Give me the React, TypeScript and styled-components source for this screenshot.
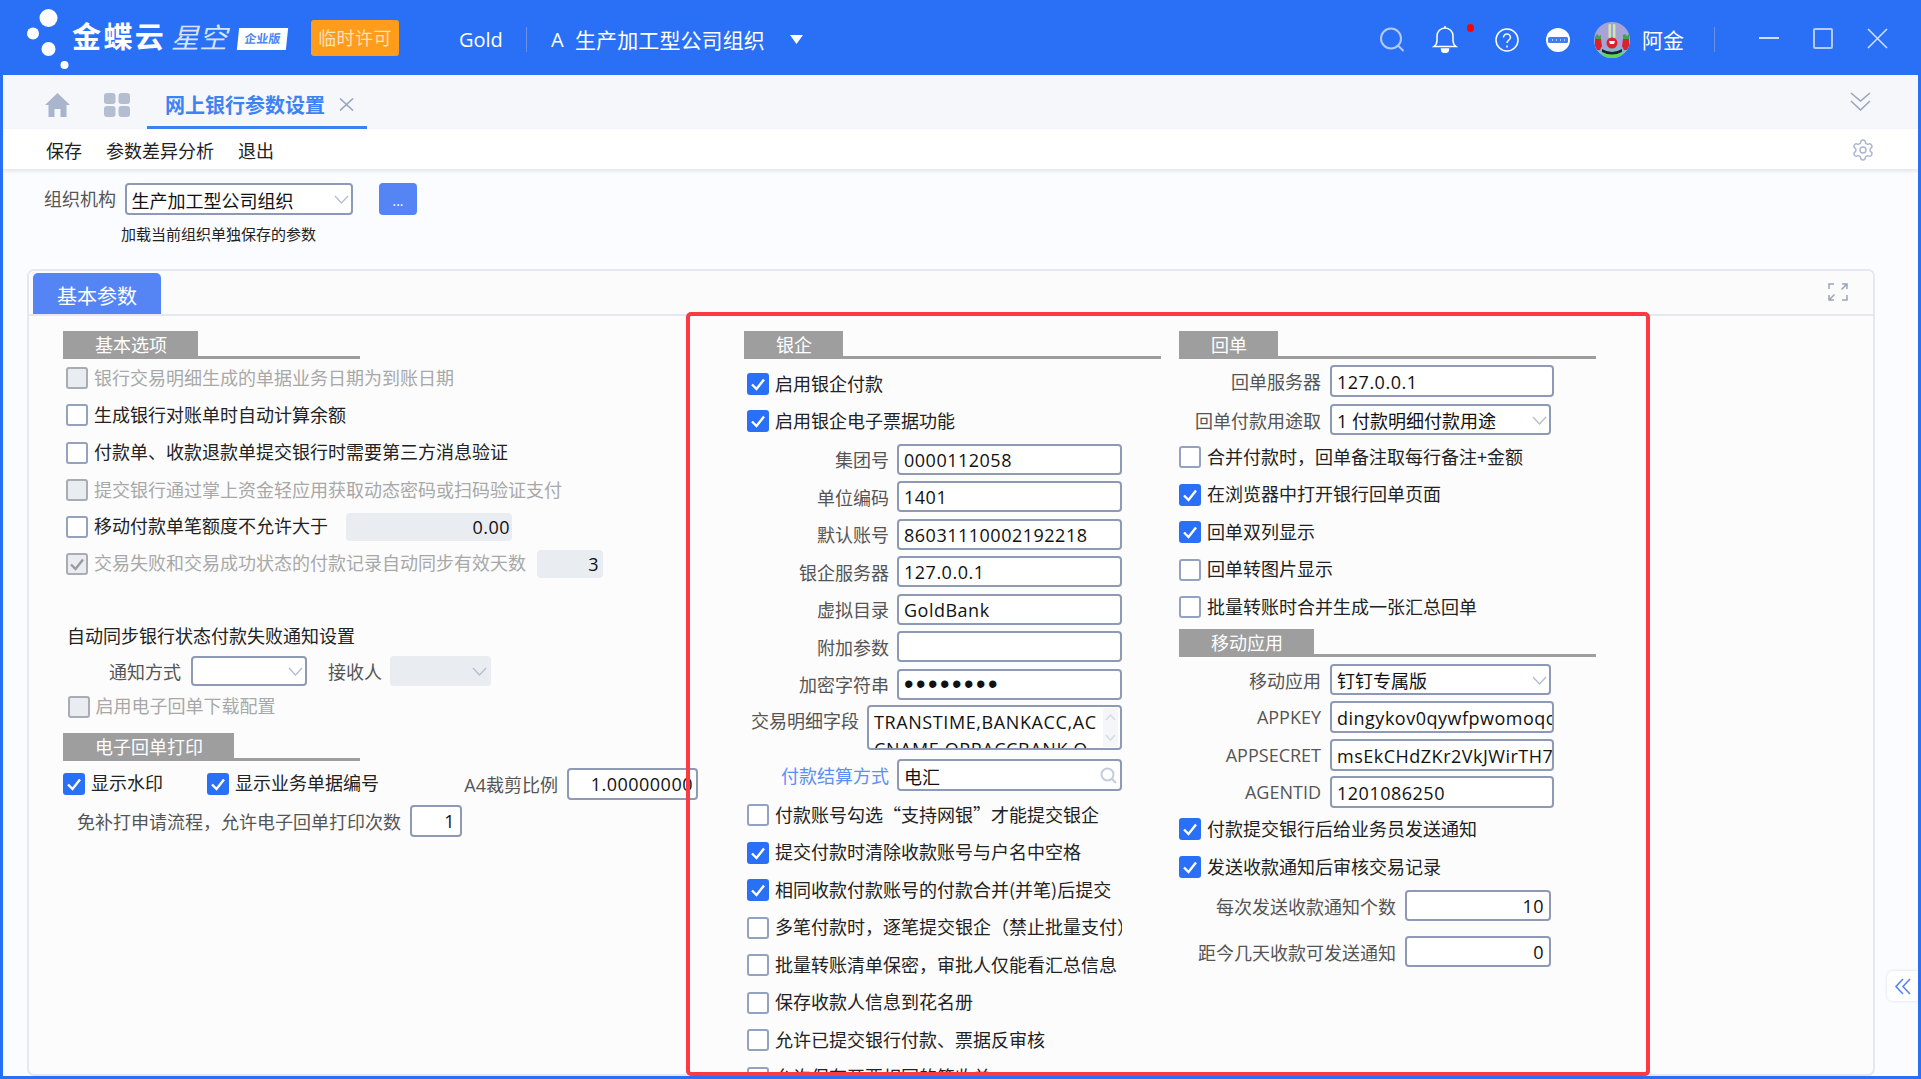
import React from "react";
import styled, { createGlobalStyle } from "styled-components";
import { Settings } from "lucide-react";

const FONT = `"Open Sans","Noto Sans CJK SC",sans-serif`;
const CJK = `"Noto Sans CJK SC","Open Sans",sans-serif`;

const Global = createGlobalStyle`
  html, body { margin: 0; padding: 0; background: #2970f6; }
  * { box-sizing: border-box; }
  body { font-family: ${FONT}; font-size: 18px; color: #222; }
`;

const Frame = styled.div`
  position: relative;
  width: 1921px;
  height: 1079px;
  display: flex;
  flex-direction: column;
  background: #2970f6;
  overflow: hidden;
`;

const Header = styled.header`
  height: 75px;
  flex: none;
  display: flex;
  align-items: center;
  padding: 4px 0 0 24px;
  color: #fff;
  white-space: nowrap;
`;

const LogoDots = styled.svg`
  width: 46px;
  height: 75px;
  flex: none;
  align-self: flex-start;
  margin-top: -4px;
  display: block;
`;

const BrandText = styled.span<{ $ml: number; $w: number }>`
  margin: -5px 0 0 ${(p) => p.$ml}px;
  width: ${(p) => p.$w}px;
  flex: none;
  font-size: 29px;
  line-height: 36px;
  font-weight: 700;
  letter-spacing: 2.4px;
`;

const BrandLight = styled(BrandText)`
  font-weight: 400;
  font-style: italic;
  letter-spacing: 0;
  font-size: 28px;
  color: #d6e4ff;
`;

const EditionBadge = styled.span`
  margin: -2px 0 0 11px;
  width: 49px;
  height: 22px;
  flex: none;
  background: #fff;
  color: #4b86f3;
  font-size: 12px;
  font-weight: 700;
  line-height: 22px;
  text-align: center;
  transform: skewX(-6deg);
`;

const LicenseBadge = styled.span`
  margin: -3px 0 0 24px;
  width: 88px;
  height: 36px;
  flex: none;
  background: #ff9c1b;
  border-radius: 3px;
  color: #fbe0b8;
  font-size: 18px;
  line-height: 36px;
  text-align: center;
  letter-spacing: 0.4px;
`;

const HeadText = styled.span<{ $ml: number; $w?: number }>`
  margin-left: ${(p) => p.$ml}px;
  ${(p) => (p.$w ? `width:${p.$w}px;flex:none;` : "")}
  font-size: 20px;
  line-height: 28px;
  color: #fff;
`;

const OrgName = styled(HeadText)`
  font-size: 21px;
  letter-spacing: 0.1px;
`;

const HeadDivider = styled.span<{ $ml: number }>`
  margin-left: ${(p) => p.$ml}px;
  width: 1px;
  height: 25px;
  flex: none;
  background: #6c8fe6;
`;

const HeadIcon = styled.span<{ $ml: number; $w: number; $raise?: number }>`
  position: relative;
  margin-left: ${(p) => p.$ml}px;
  margin-bottom: ${(p) => p.$raise ?? 0}px;
  width: ${(p) => p.$w}px;
  flex: none;
  display: flex;
  align-items: center;
  justify-content: center;
  svg { display: block; }
`;

const RedDot = styled.span`
  position: absolute;
  top: -2px;
  right: -16px;
  width: 7px;
  height: 8px;
  border-radius: 50%;
  background: #ff0000;
`;

const RightGroup = styled.div`
  margin-left: auto;
  padding-right: 33px;
  display: flex;
  align-items: center;
`;

const Content = styled.main`
  flex: 1;
  min-height: 0;
  margin: 0 3px 3px;
  display: flex;
  flex-direction: column;
  background: #fbfcff;
  overflow: hidden;
`;

const TabBar = styled.nav`
  height: 54px;
  flex: none;
  display: flex;
  align-items: center;
  padding: 8px 0 0 42px;
  background: #f5f7fb;
`;

const NavIcon = styled.span<{ $ml?: number }>`
  margin-left: ${(p) => p.$ml ?? 0}px;
  margin-top: -3px;
  flex: none;
  display: flex;
  svg { display: block; }
`;

const ActiveTab = styled.div`
  margin-left: 17px;
  width: 220px;
  height: 46px;
  flex: none;
  display: flex;
  align-items: center;
  padding-left: 18px;
  border-bottom: 3px solid #3b82f6;
  color: #3d83f4;
  font-size: 20px;
  font-weight: 700;
  white-space: nowrap;
`;

const TabClose = styled.span`
  margin-left: 14px;
  display: flex;
`;

const TabBarEnd = styled.span`
  margin: -10px 0 0 auto;
  padding-right: 47px;
  display: flex;
`;

const Toolbar = styled.div`
  position: relative;
  height: 40px;
  flex: none;
  display: flex;
  align-items: center;
  gap: 24px;
  padding: 2px 43px 0 43px;
  background: #fff;
  box-shadow: 0 2px 4px rgba(40, 50, 80, 0.12);
  color: #222;
  font-size: 18px;
  white-space: nowrap;
`;

const ToolbarEnd = styled.span`
  margin-left: auto;
  display: flex;
  color: #a9b5cc;
`;

const OrgRow = styled.div`
  margin-top: 14px;
  height: 32px;
  flex: none;
  display: flex;
  align-items: center;
  padding-left: 41px;
`;

const OrgLabel = styled.span`
  width: 72px;
  margin-right: 8.5px;
  padding-bottom: 2px;
  flex: none;
  color: #555;
  font-size: 18px;
  white-space: nowrap;
`;

const MoreButton = styled.button`
  margin-left: 26.5px;
  width: 38px;
  height: 32px;
  flex: none;
  border: 0;
  border-radius: 4px;
  background: #5585f5;
  color: #fff;
  font: 14px/36px ${FONT};
  padding: 0;
`;

const OrgNote = styled.div`
  margin-top: 8px;
  height: 22px;
  padding-left: 118px;
  font-size: 15px;
  line-height: 22px;
  color: #222;
  flex: none;
`;

const Card = styled.section`
  margin: 24px 0 0 24px;
  width: 1848px;
  flex: 1;
  min-height: 0;
  display: flex;
  flex-direction: column;
  border: 2px solid #e4e8f2;
  border-radius: 7px;
  background: #fcfcfc;
  overflow: hidden;
`;

const CardStrip = styled.div`
  height: 45px;
  flex: none;
  display: flex;
  align-items: flex-end;
  justify-content: space-between;
  padding: 0 25px 0 4px;
  border-bottom: 2px solid #e4e8f2;
  background: #fbfbfc;
`;

const CardTab = styled.div`
  width: 128px;
  height: 41px;
  border-radius: 5px 5px 0 0;
  background: #5585f5;
  color: #fff;
  font-size: 20px;
  line-height: 48px;
  text-align: center;
`;

const ExpandIcon = styled.span`
  align-self: center;
  margin-bottom: 2px;
  display: flex;
`;

const CardBody = styled.div`
  flex: 1;
  min-height: 0;
  display: grid;
  grid-template-columns: 681px 435px 417px;
  padding: 15px 0 0 34px;
  overflow: hidden;
`;

const Column = styled.div`
  display: flex;
  flex-direction: column;
  align-items: flex-start;
  min-width: 0;
`;

const SectionHead = styled.div<{ $w: number; $mt?: number }>`
  margin-top: ${(p) => p.$mt ?? 0}px;
  width: ${(p) => p.$w}px;
  height: 28px;
  flex: none;
  border-bottom: 3px solid #9e9e9e;
`;

const SectionTitle = styled.div<{ $w: number }>`
  width: ${(p) => p.$w}px;
  height: 25px;
  padding-left: 32px;
  background: #9e9e9e;
  color: #fff;
  font-size: 18px;
  line-height: 28px;
`;

const CheckRow = styled.div<{ $mt: number; $indent?: number; $muted?: boolean; $clip?: number }>`
  margin-top: ${(p) => p.$mt}px;
  margin-left: ${(p) => p.$indent ?? 0}px;
  ${(p) => (p.$clip ? `width:${p.$clip}px;overflow:hidden;` : "")}
  height: 22px;
  flex: none;
  display: flex;
  align-items: center;
  gap: 6px;
  color: ${(p) => (p.$muted ? "#a8a8a8" : "#222")};
  font-family: ${CJK};
  font-size: 18px;
  white-space: nowrap;
`;

const CheckText = styled.span`
  padding-bottom: 3px;
`;

const CheckBox = styled.span<{ $on?: boolean; $muted?: boolean }>`
  width: 22px;
  height: 22px;
  flex: none;
  display: flex;
  align-items: center;
  justify-content: center;
  border-radius: 3px;
  border: 2px solid ${(p) => (p.$on ? "#2970f6" : p.$muted ? "#a9acb3" : "#95a2bf")};
  background: ${(p) => (p.$on ? "#2970f6" : p.$muted ? "#e9ecf1" : "#fff")};
`;

const InlineRow = styled.div<{ $mt: number; $pl?: number; $h?: number }>`
  margin-top: ${(p) => p.$mt}px;
  padding-left: ${(p) => p.$pl ?? 0}px;
  height: ${(p) => p.$h ?? 31}px;
  flex: none;
  display: flex;
  align-items: center;
  white-space: nowrap;
`;

const FieldLabel = styled.span<{ $w: number; $gap?: number; $tone?: "blue"; $top?: boolean }>`
  width: ${(p) => p.$w}px;
  margin-right: ${(p) => p.$gap ?? 8}px;
  flex: none;
  text-align: right;
  font-size: 18px;
  color: ${(p) => (p.$tone === "blue" ? "#5b8ff5" : "#555")};
  white-space: nowrap;
  ${(p) => (p.$top ? "align-self:flex-start;line-height:32px;" : "")}
`;

const InputBox = styled.div<{ $w: number; $h?: number; $right?: boolean; $off?: boolean; $pr?: number; $ml?: number }>`
  margin-left: ${(p) => p.$ml ?? 0}px;
  width: ${(p) => p.$w}px;
  height: ${(p) => p.$h ?? 31}px;
  flex: none;
  display: flex;
  align-items: center;
  justify-content: ${(p) => (p.$right ? "flex-end" : "space-between")};
  padding: 1px ${(p) => p.$pr ?? 5}px 0 5px;
  border: 2px solid ${(p) => (p.$off ? "#e9ecf1" : "#8e9ab5")};
  border-radius: 4px;
  background: ${(p) => (p.$off ? "#e9ecf1" : "#fff")};
  color: #111;
  font-size: 18px;
  white-space: nowrap;
  overflow: hidden;
`;

const NumberValue = styled.span`
  letter-spacing: 0.5px;
`;

const PasswordDots = styled.span`
  font-family: "Liberation Sans", sans-serif;
  font-size: 27px;
  line-height: 27px;
  letter-spacing: 2.55px;
`;

const TextAreaBox = styled.div`
  width: 255px;
  height: 45px;
  flex: none;
  display: flex;
  padding-left: 5px;
  border: 2px solid #8e9ab5;
  border-radius: 4px;
  background: #fff;
  overflow: hidden;
`;

const TextAreaText = styled.div`
  flex: 1;
  min-width: 0;
  padding-top: 2px;
  white-space: pre;
  overflow: hidden;
  font-size: 18px;
  line-height: 27px;
  color: #111;
  letter-spacing: 0.6px;
`;

const ScrollTrack = styled.div`
  width: 15px;
  margin: 1px 2px 1px 0;
  flex: none;
  display: flex;
  flex-direction: column;
  align-items: center;
  justify-content: space-around;
  background: #f4f6fa;
`;

const CollapseTab = styled.div`
  position: absolute;
  left: 1887px;
  top: 971px;
  width: 31px;
  height: 30px;
  display: flex;
  align-items: center;
  justify-content: center;
  border-radius: 6px 0 0 6px;
  background: #fff;
  box-shadow: 0 0 3px rgba(60, 80, 130, 0.18);
`;

const RedOutline = styled.div`
  position: absolute;
  left: 686px;
  top: 312px;
  width: 964px;
  height: 764px;
  border: 4.5px solid #fb3a42;
  border-radius: 5px;
  pointer-events: none;
`;

const Chevron = () => (
  <svg width="15" height="9" viewBox="0 0 15 9" fill="none" stroke="#b3bdd0" strokeWidth="1.3">
    <path d="M1 1l6.5 7L14 1" />
  </svg>
);

const Tick = ({ muted }: { muted?: boolean }) => (
  <svg width="18" height="18" viewBox="0 0 18 18" fill="none" stroke={muted ? "#9a9a9a" : "#fff"} strokeWidth="2.4">
    <path d="M3 9.5L7.5 14L15 4.5" />
  </svg>
);

const Check = ({
  label, on, muted, mt, indent, clip,
}: { label: string; on?: boolean; muted?: boolean; mt: number; indent?: number; clip?: number }) => (
  <CheckRow $mt={mt} $indent={indent} $muted={muted} $clip={clip}>
    <CheckBox $on={on && !muted} $muted={muted}>
      {on ? <Tick muted={muted} /> : null}
    </CheckBox>
    <CheckText>{label}</CheckText>
  </CheckRow>
);

const Select = ({ w, h, text, off }: { w: number; h?: number; text?: string; off?: boolean }) => (
  <InputBox $w={w} $h={h} $off={off} $pr={2}>
    <span>{text}</span>
    <Chevron />
  </InputBox>
);

const Section = ({ w, tw, title, mt }: { w: number; tw: number; title: string; mt?: number }) => (
  <SectionHead $w={w} $mt={mt}>
    <SectionTitle $w={tw}>{title}</SectionTitle>
  </SectionHead>
);

const Avatar = () => (
  <svg width="36" height="36" viewBox="0 0 36 36">
    <defs>
      <clipPath id="av"><circle cx="18" cy="18" r="18" /></clipPath>
    </defs>
    <g clipPath="url(#av)">
      <rect width="36" height="36" fill="#a7a3d6" />
      <rect y="25" width="36" height="11" fill="#86b6cf" />
      <path d="M4 32h28l2 5H2z" fill="#5fd35f" />
      <path d="M8 27q10 6 20 0v3q-10 5-20 0z" fill="#1b2230" />
      <rect x="14.5" y="2" width="2.4" height="14" rx="1" fill="#cfe8a8" />
      <rect x="19" y="2" width="2.4" height="14" rx="1" fill="#cfe8a8" />
      <ellipse cx="18" cy="21" rx="5.5" ry="5.5" fill="#d8232a" />
      <path d="M15 19h6l-1 3h-4z" fill="#fff" />
      <path d="M1 17h6l1 7-2 4H3l-2-4z" fill="#d8232a" />
      <path d="M29 17h6v7l-2 4h-3l-2-4z" fill="#d8232a" />
      <path d="M1 15l2-3 2 2 2-1v4H1zM29 13l2-1 2 2 2-2v5h-6z" fill="#3fa34d" />
    </g>
  </svg>
);

const S = { fill: "none", stroke: "#fff", strokeWidth: 1.5 };

const leftChecks = [
  { label: "银行交易明细生成的单据业务日期为到账日期", muted: true },
  { label: "生成银行对账单时自动计算余额" },
  { label: "付款单、收款退款单提交银行时需要第三方消息验证" },
  { label: "提交银行通过掌上资金轻应用获取动态密码或扫码验证支付", muted: true },
];

const bankFields: { label: string; value?: string }[] = [
  { label: "集团号", value: "0000112058" },
  { label: "单位编码", value: "1401" },
  { label: "默认账号", value: "86031110002192218" },
  { label: "银企服务器", value: "127.0.0.1" },
  { label: "虚拟目录", value: "GoldBank" },
  { label: "附加参数", value: "" },
];

const bankChecks = [
  { label: "付款账号勾选“支持网银”才能提交银企" },
  { label: "提交付款时清除收款账号与户名中空格", on: true },
  { label: "相同收款付款账号的付款合并(并笔)后提交", on: true },
  { label: "多笔付款时，逐笔提交银企（禁止批量支付）" },
  { label: "批量转账清单保密，审批人仅能看汇总信息" },
  { label: "保存收款人信息到花名册" },
  { label: "允许已提交银行付款、票据反审核" },
  { label: "允许保存开票相同的笔收单" },
];

const receiptChecks = [
  { label: "合并付款时，回单备注取每行备注+金额" },
  { label: "在浏览器中打开银行回单页面", on: true },
  { label: "回单双列显示", on: true },
  { label: "回单转图片显示" },
  { label: "批量转账时合并生成一张汇总回单" },
];

export default function App() {
  return (
    <Frame>
      <Global />
      <Header>
        <LogoDots viewBox="24 0 46 75" fill="#fff">
          <circle cx="48.5" cy="18" r="9" />
          <circle cx="33" cy="33.5" r="6" />
          <circle cx="48.5" cy="49" r="7" />
          <circle cx="64.5" cy="65" r="4" />
        </LogoDots>
        <BrandText $ml={2} $w={94}>金蝶云</BrandText>
        <BrandLight $ml={5} $w={56}>星空</BrandLight>
        <EditionBadge>企业版</EditionBadge>
        <LicenseBadge>临时许可</LicenseBadge>
        <HeadText $ml={60} $w={47}>Gold</HeadText>
        <HeadDivider $ml={20} />
        <HeadText $ml={24} $w={24}>A</HeadText>
        <OrgName $ml={0} $w={215}>生产加工型公司组织</OrgName>
        <svg width="13" height="9" viewBox="0 0 13 9" fill="#fff"><path d="M0 0h13L6.5 9z" /></svg>
        <RightGroup>
          <HeadIcon $ml={0} $w={26}>
            <svg width="26" height="26" viewBox="0 0 26 26" fill="none" stroke="#b2cbfb" strokeWidth="2">
              <circle cx="12" cy="11.5" r="10" />
              <path d="M19.5 19l5 5" />
            </svg>
          </HeadIcon>
          <HeadIcon $ml={27} $w={26}>
            <svg width="26" height="27" viewBox="0 0 26 27" {...S}>
              <path d="M2 20.5c2-1.5 3-3 3-6V10a8 8 0 0116 0v4.5c0 3 1 4.5 3 6z" />
              <path d="M13 0v2" />
              <path d="M9.5 23h7c0 2-1.5 3.5-3.5 3.5S9.5 25 9.5 23z" fill="#fff" />
            </svg>
            <RedDot />
          </HeadIcon>
          <HeadIcon $ml={37} $w={24}>
            <svg width="24" height="24" viewBox="0 0 24 24" {...S}>
              <circle cx="12" cy="12" r="11" />
              <path d="M8.5 9.5a3.5 3.5 0 117 0c0 2.5-3.5 2.5-3.5 5.5" />
              <path d="M12 17.5v2" />
            </svg>
          </HeadIcon>
          <HeadIcon $ml={27} $w={24}>
            <svg width="24" height="24" viewBox="0 0 24 24">
              <circle cx="12" cy="12" r="12" fill="#fff" />
              <rect x="2" y="9" width="20" height="6" rx="1.5" fill="#3f7ef0" />
              <path d="M6 12h1M10 12h1M14 12h1M18 12h1" stroke="#cfe0ff" strokeWidth="1.6" />
            </svg>
          </HeadIcon>
          <HeadIcon $ml={24} $w={36}><Avatar /></HeadIcon>
          <OrgName $ml={12} $w={42}>阿金</OrgName>
          <HeadDivider $ml={30} />
          <HeadIcon $ml={44} $w={20} $raise={3}>
            <svg width="20" height="3" viewBox="0 0 20 3"><rect width="20" height="2" fill="#cfe0ff" /></svg>
          </HeadIcon>
          <HeadIcon $ml={34} $w={20} $raise={3}>
            <svg width="20" height="21" viewBox="0 0 20 21" fill="none" stroke="#b2cbfb" strokeWidth="2">
              <rect x="1" y="1" width="18" height="19" rx="1" />
            </svg>
          </HeadIcon>
          <HeadIcon $ml={34} $w={21} $raise={3}>
            <svg width="21" height="21" viewBox="0 0 21 21" fill="none" stroke="#cfe0ff" strokeWidth="1.6">
              <path d="M1 1l19 19M20 1L1 20" />
            </svg>
          </HeadIcon>
        </RightGroup>
      </Header>

      <Content>
        <TabBar>
          <NavIcon>
            <svg width="25" height="24" viewBox="0 0 25 24" fill="#a9b5cc">
              <path d="M12.5 0L25 12h-3.5v12h-6v-8h-6v8h-6V12H0z" />
            </svg>
          </NavIcon>
          <NavIcon $ml={34}>
            <svg width="26" height="24" viewBox="0 0 26 24" fill="#b4bed1">
              <rect width="11.5" height="11" rx="3" />
              <rect x="14.5" width="11.5" height="11" rx="3" />
              <rect y="13" width="11.5" height="11" rx="3" />
              <rect x="14.5" y="13" width="11.5" height="11" rx="3" />
            </svg>
          </NavIcon>
          <ActiveTab>
            网上银行参数设置
            <TabClose>
              <svg width="15" height="13" viewBox="0 0 15 13" fill="none" stroke="#98a4bb" strokeWidth="1.6">
                <path d="M1 0.5l13 12M14 0.5L1 12.5" />
              </svg>
            </TabClose>
          </ActiveTab>
          <TabBarEnd>
            <svg width="21" height="19" viewBox="0 0 21 19" fill="none" stroke="#98a4bb" strokeWidth="1.5">
              <path d="M1 1l9.5 8L20 1M1 9l9.500 9L20 9" />
            </svg>
          </TabBarEnd>
        </TabBar>

        <Toolbar>
          <span>保存</span>
          <span>参数差异分析</span>
          <span>退出</span>
          <ToolbarEnd><Settings size={24} strokeWidth={1.4} /></ToolbarEnd>
        </Toolbar>

        <OrgRow>
          <OrgLabel>组织机构</OrgLabel>
          <Select w={228} h={32} text="生产加工型公司组织" />
          <MoreButton>...</MoreButton>
        </OrgRow>
        <OrgNote>加载当前组织单独保存的参数</OrgNote>

        <Card>
          <CardStrip>
            <CardTab>基本参数</CardTab>
            <ExpandIcon>
              <svg width="20" height="18" viewBox="0 0 20 18" fill="none" stroke="#9aa5bb" strokeWidth="1.5">
                <path d="M1 6V1h5M14 1h5v5M1 12v5h5M14 17h5v-5M19 1l-5.5 5.5M1 17l5.5-5.5" />
              </svg>
            </ExpandIcon>
          </CardStrip>
          <CardBody>
            <Column>
              <Section w={297} tw={135} title="基本选项" />
              {leftChecks.map((c, i) => (
                <Check key={c.label} label={c.label} muted={c.muted} mt={i === 0 ? 8 : 15.4} indent={3} />
              ))}
              <InlineRow $mt={11.6} $h={28}>
                <Check label="移动付款单笔额度不允许大于" mt={0} indent={3} />
                <InputBox $ml={18} $w={166} $h={28} $right $off $pr={0}>
                  <NumberValue>0.00</NumberValue>
                </InputBox>
              </InlineRow>
              <InlineRow $mt={9} $h={28}>
                <Check label="交易失败和交易成功状态的付款记录自动同步有效天数" on muted mt={0} indent={3} />
                <InputBox $ml={11} $w={66} $h={28} $right $off $pr={2}><NumberValue>3</NumberValue></InputBox>
              </InlineRow>
              <InlineRow $mt={45} $h={24} $pl={4}>自动同步银行状态付款失败通知设置</InlineRow>
              <InlineRow $mt={9} $h={30} $pl={46}>
                <FieldLabel $w={72} $gap={10}>通知方式</FieldLabel>
                <Select w={116} h={30} />
                <FieldLabel $w={75} $gap={8}>接收人</FieldLabel>
                <Select w={101} h={30} off />
              </InlineRow>
              <Check label="启用电子回单下载配置" muted mt={10} indent={4.5} />
              <Section w={297} tw={171} title="电子回单打印" mt={15} />
              <InlineRow $mt={7} $h={32}>
                <Check label="显示水印" on mt={0} />
                <Check label="显示业务单据编号" on mt={0} indent={44} />
                <FieldLabel $w={179} $gap={9}>A4裁剪比例</FieldLabel>
                <InputBox $w={131} $h={32} $right $pr={3}><NumberValue>1.00000000</NumberValue></InputBox>
              </InlineRow>
              <InlineRow $mt={5} $h={32} $pl={14}>
                <FieldLabel $w={324} $gap={9}>免补打申请流程，允许电子回单打印次数</FieldLabel>
                <InputBox $w={52} $h={32} $right><NumberValue>1</NumberValue></InputBox>
              </InlineRow>
            </Column>

            <Column>
              <Section w={417} tw={99} title="银企" />
              <Check label="启用银企付款" on mt={14} indent={3} />
              <Check label="启用银企电子票据功能" on mt={15} indent={3} />
              {bankFields.map((f, i) => (
                <InlineRow key={f.label} $mt={i === 0 ? 11.5 : 6.5}>
                  <FieldLabel $w={145}>{f.label}</FieldLabel>
                  <InputBox $w={225}><NumberValue>{f.value}</NumberValue></InputBox>
                </InlineRow>
              ))}
              <InlineRow $mt={6.5}>
                <FieldLabel $w={145}>加密字符串</FieldLabel>
                <InputBox $w={225}><PasswordDots>••••••••</PasswordDots></InputBox>
              </InlineRow>
              <InlineRow $mt={5.5} $h={45}>
                <FieldLabel $w={115} $top>交易明细字段</FieldLabel>
                <TextAreaBox>
                  <TextAreaText>{"TRANSTIME,BANKACC,AC\nCNAME,OPPACCBANK,O"}</TextAreaText>
                  <ScrollTrack>
                    <svg width="11" height="7" viewBox="0 0 11 7" fill="none" stroke="#d5dbe6" strokeWidth="1.5"><path d="M1 6l4.5-5L10 6" /></svg>
                    <svg width="11" height="7" viewBox="0 0 11 7" fill="none" stroke="#d5dbe6" strokeWidth="1.5"><path d="M1 1l4.5 5L10 1" /></svg>
                  </ScrollTrack>
                </TextAreaBox>
              </InlineRow>
              <InlineRow $mt={9} $h={32}>
                <FieldLabel $w={145} $tone="blue">付款结算方式</FieldLabel>
                <InputBox $w={225} $h={32} $pr={3}>
                  <span>电汇</span>
                  <svg width="17" height="17" viewBox="0 0 17 17" fill="none" stroke="#c3ccdb" strokeWidth="2">
                    <circle cx="7.5" cy="7.5" r="6" /><path d="M12 12l4 4" />
                  </svg>
                </InputBox>
              </InlineRow>
              {bankChecks.map((c, i) => (
                <Check key={c.label} label={c.label} on={c.on} mt={i === 0 ? 13 : 15.5} indent={3} clip={375} />
              ))}
            </Column>

            <Column>
              <Section w={417} tw={99} title="回单" />
              <InlineRow $mt={6} $h={32}>
                <FieldLabel $w={142} $gap={9}>回单服务器</FieldLabel>
                <InputBox $w={224} $h={32}><NumberValue>127.0.0.1</NumberValue></InputBox>
              </InlineRow>
              <InlineRow $mt={7}>
                <FieldLabel $w={142} $gap={9}>回单付款用途取</FieldLabel>
                <Select w={221} text="1 付款明细付款用途" />
              </InlineRow>
              {receiptChecks.map((c, i) => (
                <Check key={c.label} label={c.label} on={c.on} mt={i === 0 ? 11 : 15.5} />
              ))}
              <Section w={417} tw={135} title="移动应用" mt={11} />
              <InlineRow $mt={7}>
                <FieldLabel $w={142} $gap={9}>移动应用</FieldLabel>
                <Select w={221} text="钉钉专属版" />
              </InlineRow>
              <InlineRow $mt={6} $h={32}>
                <FieldLabel $w={142} $gap={9}>APPKEY</FieldLabel>
                <InputBox $w={224} $h={32} $pr={0}><NumberValue>dingykov0qywfpwomoqc</NumberValue></InputBox>
              </InlineRow>
              <InlineRow $mt={6} $h={32}>
                <FieldLabel $w={142} $gap={9}>APPSECRET</FieldLabel>
                <InputBox $w={224} $h={32} $pr={0}><NumberValue>msEkCHdZKr2VkJWirTH7</NumberValue></InputBox>
              </InlineRow>
              <InlineRow $mt={5} $h={32}>
                <FieldLabel $w={142} $gap={9}>AGENTID</FieldLabel>
                <InputBox $w={224} $h={32}><NumberValue>1201086250</NumberValue></InputBox>
              </InlineRow>
              <Check label="付款提交银行后给业务员发送通知" on mt={10} />
              <Check label="发送收款通知后审核交易记录" on mt={16} />
              <InlineRow $mt={12}>
                <FieldLabel $w={217} $gap={9}>每次发送收款通知个数</FieldLabel>
                <InputBox $w={146} $right><NumberValue>10</NumberValue></InputBox>
              </InlineRow>
              <InlineRow $mt={15}>
                <FieldLabel $w={217} $gap={9}>距今几天收款可发送通知</FieldLabel>
                <InputBox $w={146} $right><NumberValue>0</NumberValue></InputBox>
              </InlineRow>
            </Column>
          </CardBody>
        </Card>
      </Content>

      <CollapseTab>
        <svg width="18" height="17" viewBox="0 0 18 17" fill="none" stroke="#5585f5" strokeWidth="1.6">
          <path d="M9 1L2 8.5 9 16M16 1L9 8.5 16 16" />
        </svg>
      </CollapseTab>
      <RedOutline />
    </Frame>
  );
}
